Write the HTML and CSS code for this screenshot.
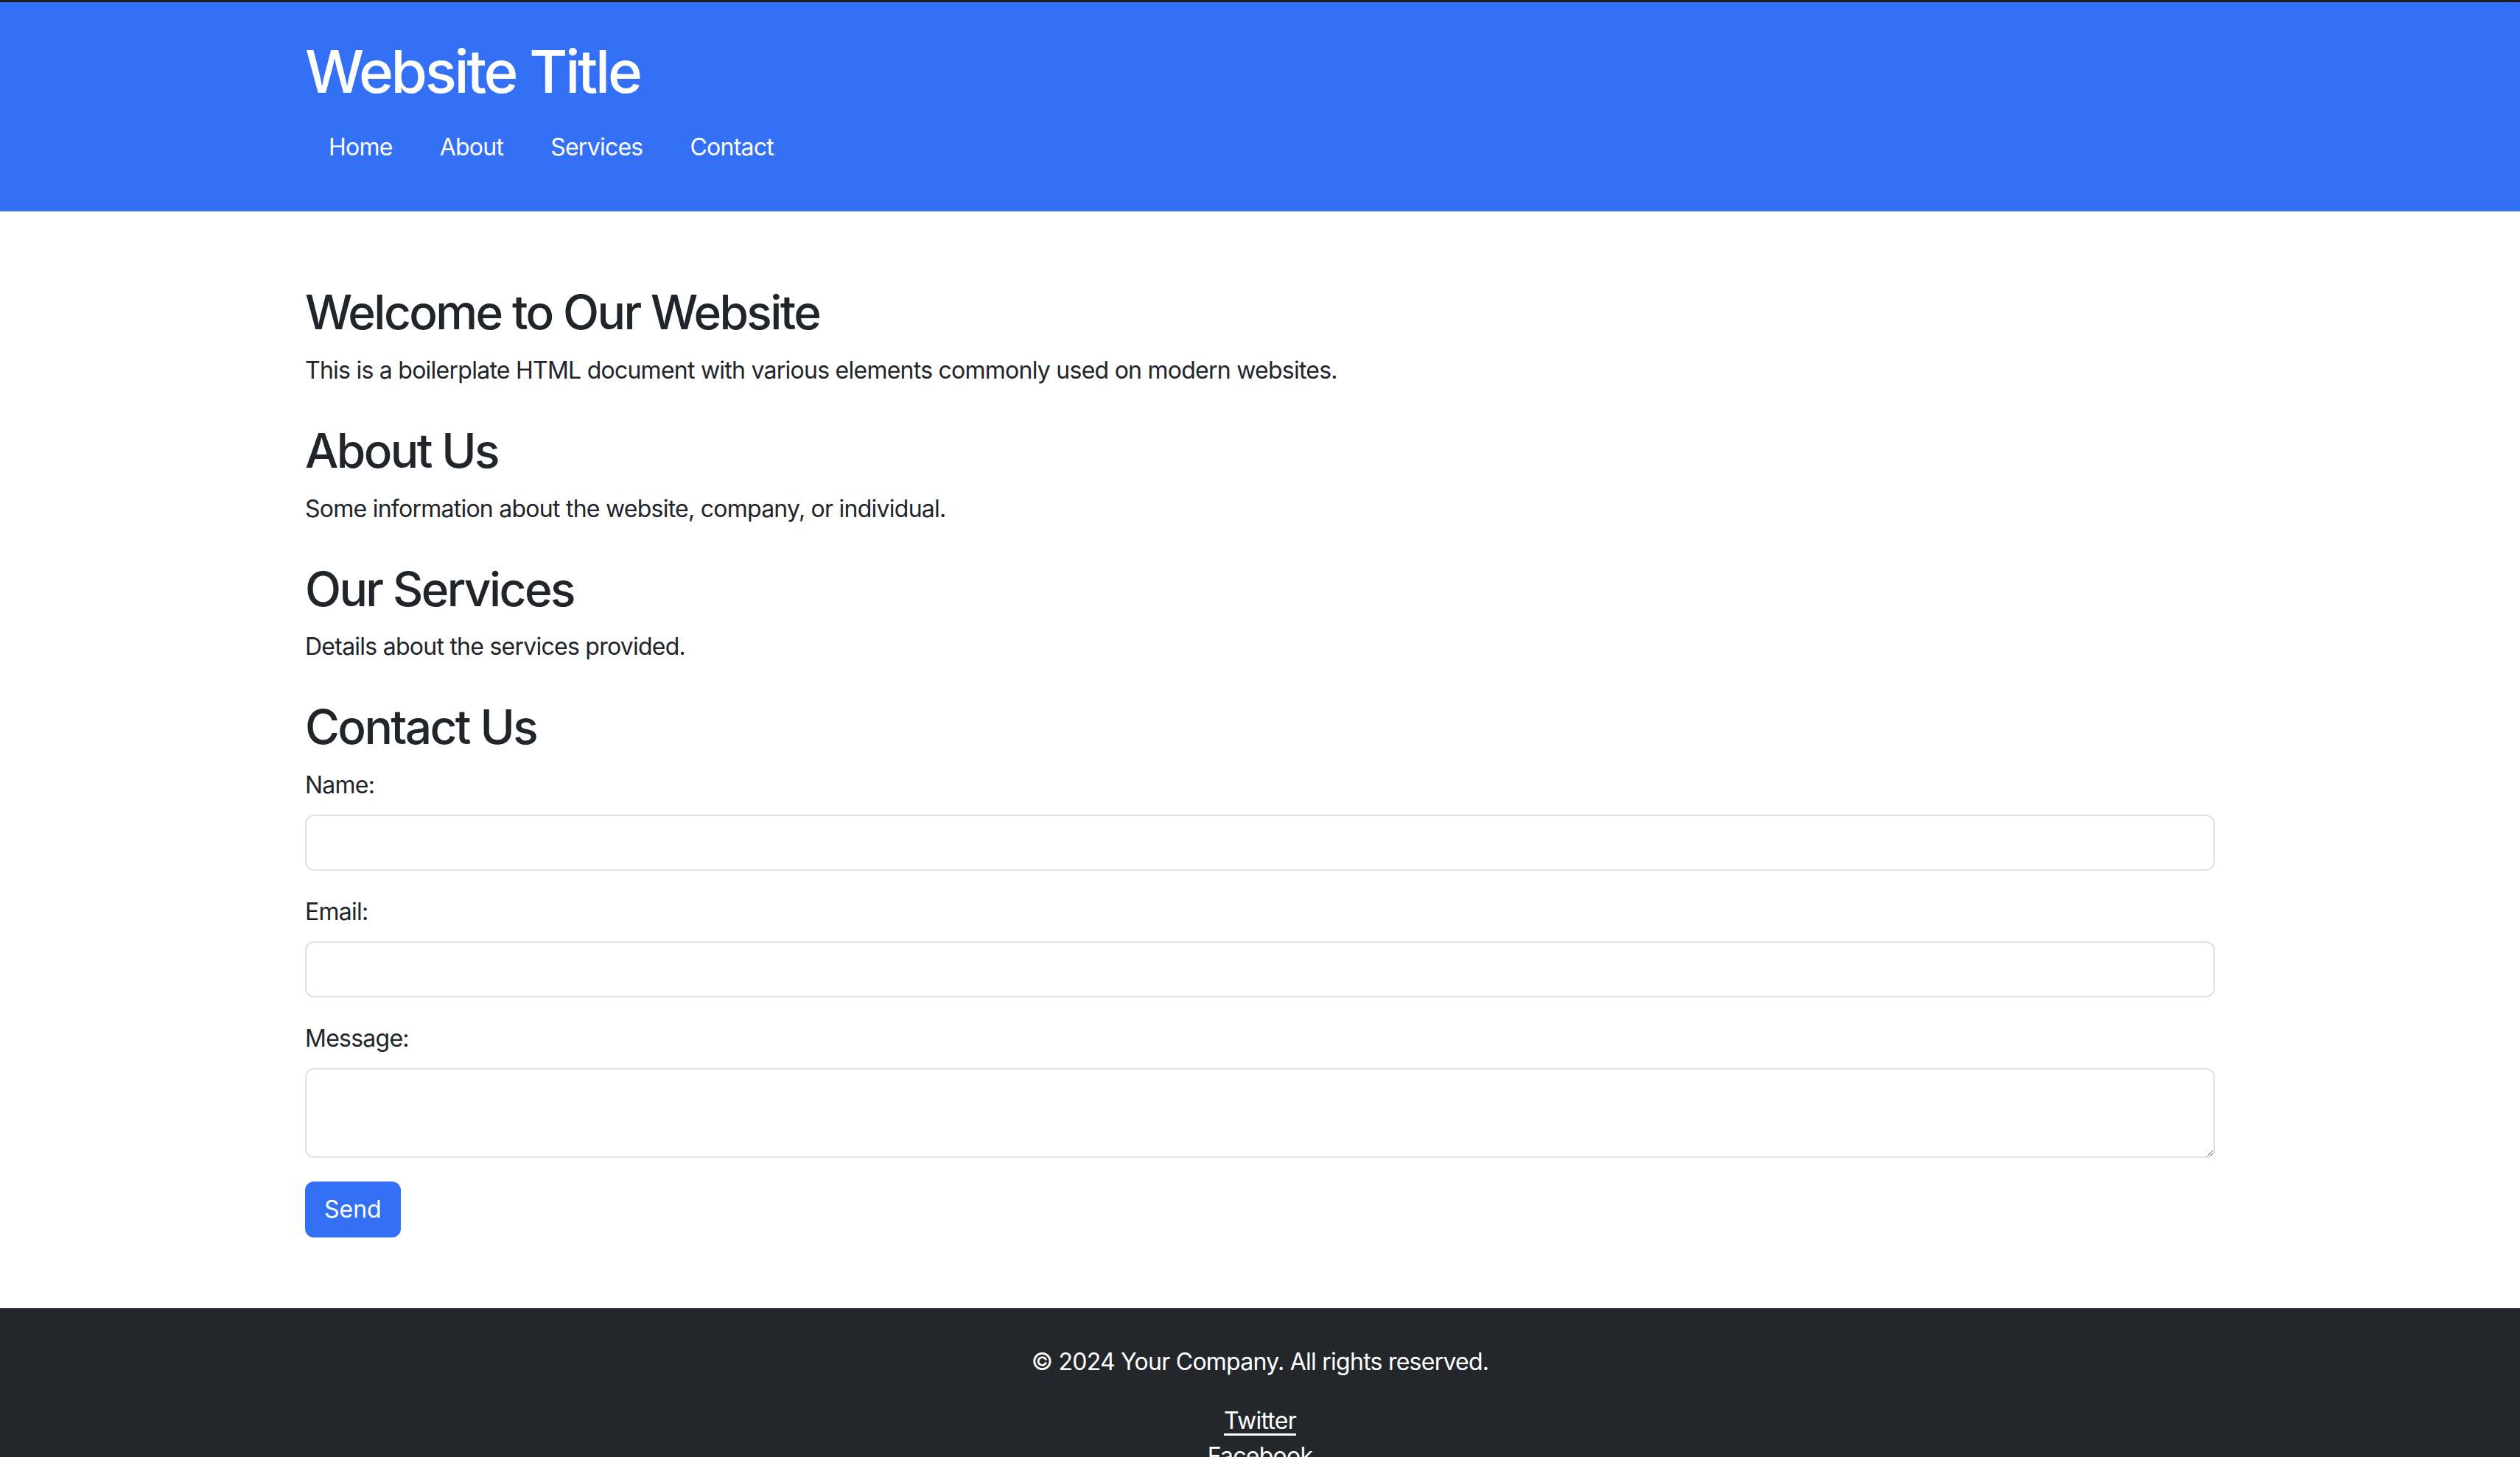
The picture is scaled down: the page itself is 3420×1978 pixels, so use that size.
FILE: index.html
```html
<!DOCTYPE html>
<html lang="en">
<head>
<meta charset="utf-8">
<title>Website Title</title>
<link rel="stylesheet" href="styles.css">
</head>
<body>
<header class="site-header">
  <div class="container">
    <h1 class="site-title">Website Title</h1>
    <nav>
      <ul class="nav-list">
        <li><a class="nav-link" href="#home">Home</a></li>
        <li><a class="nav-link" href="#about">About</a></li>
        <li><a class="nav-link" href="#services">Services</a></li>
        <li><a class="nav-link" href="#contact">Contact</a></li>
      </ul>
    </nav>
  </div>
</header>
<main class="container main">
  <section class="section" id="home">
    <h2>Welcome to Our Website</h2>
    <p>This is a boilerplate HTML document with various elements commonly used on modern websites.</p>
  </section>
  <section class="section" id="about">
    <h2>About Us</h2>
    <p>Some information about the website, company, or individual.</p>
  </section>
  <section class="section" id="services">
    <h2>Our Services</h2>
    <p>Details about the services provided.</p>
  </section>
  <section class="section contact" id="contact">
    <h2>Contact Us</h2>
    <form class="form">
      <div class="field">
        <label class="label" for="name">Name:</label>
        <input class="control" type="text" id="name">
      </div>
      <div class="field">
        <label class="label" for="email">Email:</label>
        <input class="control" type="email" id="email">
      </div>
      <div class="field">
        <label class="label" for="message">Message:</label>
        <textarea class="control area" id="message" rows="2"></textarea>
      </div>
      <button class="btn" type="button">Send</button>
    </form>
  </section>
</main>
<footer class="site-footer">
  <p class="copy">© 2024 Your Company. All rights reserved.</p>
  <ul class="social">
    <li><a href="#">Twitter</a></li>
    <li><a href="#">Facebook</a></li>
    <li><a href="#">Instagram</a></li>
  </ul>
</footer>
</body>
</html>
```
FILE: styles.css
```css
* { box-sizing: border-box; }
html, body { margin: 0; padding: 0; }
body {
  font-family: Inter, "Noto Sans", sans-serif;
  font-size: 32px;
  line-height: 48px;
  color: #212529;
  background: #fff;
  letter-spacing: -0.75px;
}
.container {
  width: 2640px;
  margin: 0 auto;
  padding: 0 24px;
}
.site-header {
  background: #3470f5;
  color: #fff;
  border-top: 3px solid #1c1c1e;
  padding: 46px 0 47px;
}
.site-title {
  margin: 0 0 15px;
  font-size: 80px;
  line-height: 96px;
  font-weight: 500;
  letter-spacing: -3.3px;
}
.nav-list {
  list-style: none;
  margin: 0;
  padding: 0;
  display: flex;
}
.nav-link {
  display: block;
  padding: 16px 32px;
  color: #fff;
  text-decoration: none;
}
.main {
  padding-top: 99px;
  padding-bottom: 96px;
}
.section { margin-bottom: 47px; }
.section.contact { margin-bottom: 0; }
h2 {
  margin: 0 0 16px;
  font-size: 64px;
  line-height: 76.8px;
  font-weight: 500;
  letter-spacing: -2.6px;
}
p { margin: 0 0 32px; }
.section p { margin: 0; }
.field { margin-bottom: 32px; }
.label {
  display: block;
  margin-bottom: 16px;
}
.control {
  display: block;
  width: 100%;
  height: 76px;
  padding: 12px 24px;
  font: inherit;
  color: #212529;
  background: #fff;
  border: 2px solid #dee2e6;
  border-radius: 12px;
}
.area { height: 122px; resize: vertical; }
.btn {
  font: inherit;
  color: #fff;
  background: #3470f5;
  border: 2px solid #3470f5;
  border-radius: 12px;
  padding: 12px 24px;
  height: 76px;
}
.site-footer {
  background: #23262b;
  color: #fff;
  text-align: center;
  padding: 49px 0 48px;
}
.copy { margin: 0 0 32px; }
.social {
  list-style: none;
  margin: 0;
  padding: 0;
}
.social a { color: #fff; text-decoration: underline; text-underline-offset: 6px; }
```
